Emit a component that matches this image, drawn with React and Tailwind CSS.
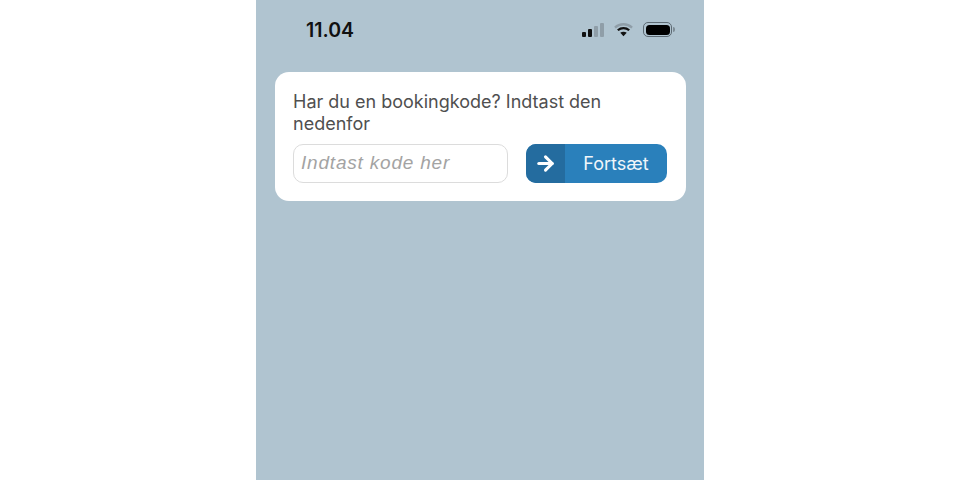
import { ArrowRight } from "lucide-react";

function StatusIcons() {
  return (
    <div className="flex items-center gap-[10px]">
      <svg width="22" height="14" viewBox="0 0 22 14">
        <rect x="0" y="9" width="4" height="5" rx="1" fill="#111" />
        <rect x="6" y="6" width="4" height="8" rx="1" fill="#111" />
        <rect x="12" y="3" width="4" height="11" rx="1" fill="#8f9ea8" />
        <rect x="18" y="0" width="4" height="14" rx="1" fill="#8f9ea8" />
      </svg>
      <svg width="19" height="15" viewBox="0 0 20 15">
        <path d="M1 5.5 C6 0.8 14 0.8 19 5.5" fill="none" stroke="#8f9ea8" strokeWidth="2.4" />
        <path d="M4 8.3 C7.5 5.2 12.5 5.2 16 8.3" fill="none" stroke="#111" strokeWidth="2.4" />
        <path d="M10 14.5 L6.6 11 C8.6 9.4 11.4 9.4 13.4 11 Z" fill="#111" />
      </svg>
      <div className="flex items-center gap-[1px]">
        <div className="w-[29px] h-[15px] rounded-[5px] border border-[#5d6a73] p-[1.5px]">
          <div className="w-full h-full rounded-[3.5px] bg-black" />
        </div>
        <div className="w-[2px] h-[5px] rounded-r-sm bg-[#7d8b94]" />
      </div>
    </div>
  );
}

export default function App() {
  return (
    <div className="h-[480px] bg-white flex justify-center font-['Inter',sans-serif]">
      <div className="w-[448px] bg-[#b0c4d0] pl-[19px] overflow-hidden">
        <div className="h-[72px] pt-[17px] flex items-start justify-between pl-[31px] pr-[29px]">
          <span className="text-[19.5px] leading-[26px] font-semibold text-[#111]">11.04</span>
          <div className="pt-[5px]">
            <StatusIcons />
          </div>
        </div>

        <div className="bg-white rounded-[14px] pl-[18px] pr-[19px] pt-[19px] pb-[18px] w-[411px]">
          <p className="text-[18px] leading-[22px] text-[#4f4f4f]">
            Har du en bookingkode? Indtast den nedenfor
          </p>
          <div className="mt-[9px] flex justify-between">
            <div className="w-[215px] h-[39px] rounded-[10px] border-[1.5px] border-[#dcdcdc] flex items-center pl-[7px]">
              <span className="text-[19px] italic tracking-[0.8px] text-[#a3a3a3] font-['Liberation_Sans',sans-serif]">
                Indtast kode her
              </span>
            </div>
            <button className="w-[141px] h-[39px] rounded-[10px] bg-[#2a80bb] flex overflow-hidden">
              <span className="w-[39px] h-full bg-[#246c9f] flex items-center justify-center">
                <ArrowRight size={23} color="white" strokeWidth={3.2} />
              </span>
              <span className="flex-1 text-center text-[18px] leading-[39px] text-[#f0f6fa]">Fortsæt</span>
            </button>
          </div>
        </div>
      </div>
    </div>
  );
}
